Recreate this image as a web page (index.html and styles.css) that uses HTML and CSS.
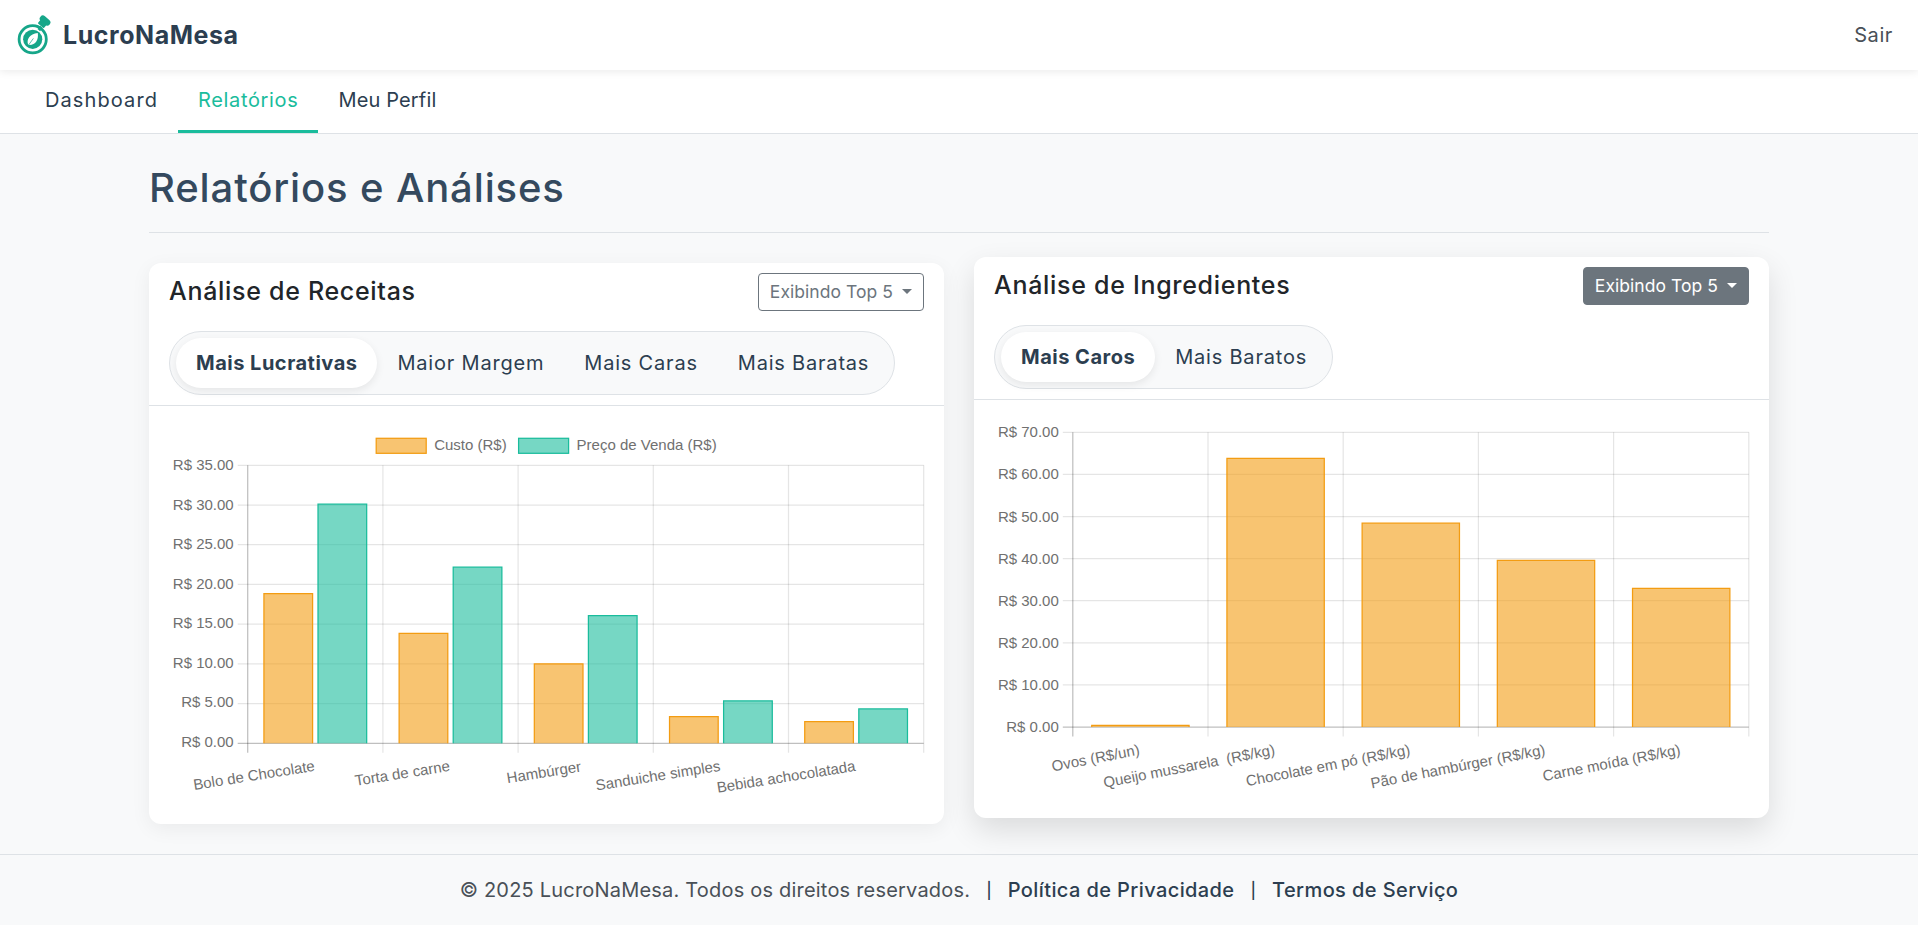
FILE: index.html
```html
<!DOCTYPE html>
<html lang="pt-BR">
<head>
    <meta charset="UTF-8">
    <meta name="viewport" content="width=device-width, initial-scale=1.0">
    <title>Relatórios - LucroNaMesa</title>
    <link rel="stylesheet" href="styles.css">
</head>
<body>
    <header class="topbar">
        <a class="brand" href="#">
            <svg class="brand-logo" viewBox="0 0 36 40" aria-hidden="true">
                <circle cx="15.7" cy="24.3" r="13.6" fill="none" stroke="#16a689" stroke-width="2.8"/>
                <circle cx="15.7" cy="24.3" r="9.6" fill="#16a689"/>
                <path d="M11.2 29.8c-2-5.6 1.4-10.6 9.6-11.8 1 7.2-2.6 12.6-9.6 11.8z" fill="#fff"/>
                <path d="M10.6 31.4l5.8-8" stroke="#16a689" stroke-width=".7"/>
                <path d="M21.8 12.4l2.6 2.2" stroke="#16a689" stroke-width="4"/>
                <g transform="rotate(40 26 8)" fill="#16a689">
                    <rect x="20" y="1.6" width="12" height="6.4" rx="3.2"/>
                    <rect x="22" y="6" width="8" height="5.6" rx="1"/>
                </g>
            </svg>
            <span class="brand-name">LucroNaMesa</span>
        </a>
        <a class="logout" href="#">Sair</a>
    </header>

    <nav class="mainnav">
        <a class="mainnav-link" href="#">Dashboard</a>
        <a class="mainnav-link active" href="#">Relatórios</a>
        <a class="mainnav-link tight" href="#">Meu Perfil</a>
    </nav>

    <main class="page">
        <h1 class="page-title">Relatórios e Análises</h1>

        <div class="report-grid">
            <section class="card">
                <div class="card-head">
                    <div class="card-top">
                        <h2 class="card-title">Análise de Receitas</h2>
                        <button class="top-btn" type="button">Exibindo Top 5</button>
                    </div>
                    <div class="pills">
                        <a class="pill active" href="#">Mais Lucrativas</a>
                        <a class="pill" href="#">Maior Margem</a>
                        <a class="pill" href="#">Mais Caras</a>
                        <a class="pill" href="#">Mais Baratas</a>
                    </div>
                </div>
                <div class="chart" id="recipesChart"></div>
            </section>

            <section class="card card-raised">
                <div class="card-head">
                    <div class="card-top">
                        <h2 class="card-title">Análise de Ingredientes</h2>
                        <button class="top-btn filled" type="button">Exibindo Top 5</button>
                    </div>
                    <div class="pills">
                        <a class="pill active" href="#">Mais Caros</a>
                        <a class="pill" href="#">Mais Baratos</a>
                    </div>
                </div>
                <div class="chart" id="ingredientsChart"></div>
            </section>
        </div>
    </main>

    <footer class="footer">
        <span class="footer-copy">© 2025 LucroNaMesa. Todos os direitos reservados.</span>
        <span class="footer-sep">|</span>
        <a href="#">Política de Privacidade</a>
        <span class="footer-sep">|</span>
        <a href="#">Termos de Serviço</a>
    </footer>

    <script src="charts.js"></script>
</body>
</html>
```

FILE: styles.css
```css
* {
    margin: 0;
    padding: 0;
    box-sizing: border-box;
}

body {
    display: flex;
    flex-direction: column;
    background-color: #f8f9fa;
    font-family: Inter, "Noto Sans", sans-serif;
    color: #2c3e50;
}

a {
    color: inherit;
    text-decoration: none;
}

.topbar {
    display: flex;
    align-items: center;
    justify-content: space-between;
    height: 70px;
    padding: 0 25px 0 17px;
    background-color: #fff;
    box-shadow: 0 2px 8px rgba(0, 0, 0, 0.08);
    position: relative;
}

.brand {
    display: flex;
    align-items: center;
    gap: 10px;
}

.brand-logo {
    width: 36px;
    height: 40px;
}

.brand-name {
    font-size: 25px;
    font-weight: 700;
    letter-spacing: 0.55px;
}

.logout {
    font-size: 20px;
    letter-spacing: 0.6px;
    color: #495057;
}

.mainnav {
    display: flex;
    height: 64px;
    padding: 0 25px;
    background-color: #fff;
    border-bottom: 1px solid #dee2e6;
}

.mainnav-link {
    display: flex;
    align-items: center;
    height: 63px;
    padding: 0 20px;
    font-size: 20px;
    letter-spacing: 1.1px;
    border-bottom: 3px solid transparent;
}

.mainnav-link.tight {
    letter-spacing: 0.15px;
}

.mainnav-link.active {
    color: #1abc9c;
    letter-spacing: 0.65px;
    border-bottom-color: #1abc9c;
}

.page {
    width: 1620px;
    margin: 0 auto;
    padding: 25px 0 30px;
}

.page-title {
    padding-bottom: 15px;
    border-bottom: 1px solid #dee2e6;
    font-size: 40px;
    font-weight: 500;
    line-height: 58px;
    letter-spacing: 0.87px;
    color: #34495e;
}

.report-grid {
    display: grid;
    grid-template-columns: 795px 795px;
    gap: 30px;
    margin-top: 30px;
}

.card {
    height: 561px;
    background-color: #fff;
    border-radius: 12px;
    box-shadow: 0 5px 20px rgba(0, 0, 0, 0.06);
}

.card-raised {
    transform: translateY(-6px);
    box-shadow: 0 12px 30px rgba(0, 0, 0, 0.12);
}

.card-head {
    height: 143px;
    padding: 10px 20px 0;
    border-bottom: 1px solid #dee2e6;
}

.card-top {
    display: flex;
    align-items: center;
    justify-content: space-between;
    height: 38px;
}

.card-title {
    padding-bottom: 2px;
    font-size: 25px;
    font-weight: 500;
    letter-spacing: 0.7px;
    color: #212529;
}

.top-btn {
    display: flex;
    align-items: center;
    gap: 9px;
    height: 38px;
    padding: 0 11px 2px;
    font-family: inherit;
    font-size: 17.5px;
    letter-spacing: 0.05px;
    color: #6c757d;
    background-color: #fff;
    border: 1px solid #6c757d;
    border-radius: 4px;
}

.top-btn::after {
    content: "";
    border-top: 5px solid currentColor;
    border-left: 5px solid transparent;
    border-right: 5px solid transparent;
}

.top-btn.filled {
    color: #fff;
    background-color: #6c757d;
}

.pills {
    display: inline-flex;
    align-items: center;
    height: 64px;
    margin-top: 20px;
    padding: 0 5px 0 6px;
    background-color: #f8f9fa;
    border: 1px solid #dee2e6;
    border-radius: 32px;
}

.pill {
    display: flex;
    align-items: center;
    height: 50px;
    padding: 0 20px;
    font-size: 20px;
    letter-spacing: 0.8px;
    border-radius: 25px;
}

.pill.active {
    font-weight: 700;
    letter-spacing: 0.5px;
    background-color: #fff;
    box-shadow: 0 3px 8px rgba(0, 0, 0, 0.08);
}

.chart svg {
    display: block;
}

.chart-text {
    font-family: "Liberation Sans", Arial, sans-serif;
    font-size: 15px;
    white-space: pre;
    fill: #707070;
}

.footer {
    display: flex;
    align-items: center;
    justify-content: center;
    height: 71px;
    border-top: 1px solid #dee2e6;
    font-size: 20px;
    color: #495057;
}

.footer-copy {
    letter-spacing: 0.2px;
}

.footer a {
    font-weight: 500;
    letter-spacing: 0.4px;
    color: #2c3e50;
}

.footer-sep {
    margin: 0 16px;
    font-size: 16px;
    font-weight: 500;
    color: #2c3e50;
}
```

FILE: charts.js
```js
const NS = 'http://www.w3.org/2000/svg';
const ORANGE = { fill: 'rgba(243, 156, 18, 0.6)', line: '#f39c12' };
const GREEN = { fill: 'rgba(26, 188, 156, 0.6)', line: '#1abc9c' };

function add(parent, tag, attrs, text) {
    const el = document.createElementNS(NS, tag);
    for (const key in attrs) el.setAttribute(key, attrs[key]);
    if (text) el.textContent = text;
    parent.appendChild(el);
    return el;
}

function drawChart(id, cfg) {
    const svg = add(document.getElementById(id), 'svg', { width: 795, height: cfg.height });
    const catWidth = (cfg.right - cfg.left) / cfg.labels.length;
    const perValue = (cfg.base - cfg.top) / cfg.max;
    const tickBottom = cfg.base + 9.5;

    // grid
    for (let v = 0; v <= cfg.max; v += cfg.step) {
        const y = cfg.base - v * perValue;
        add(svg, 'line', {
            x1: cfg.left - 10, x2: cfg.right, y1: y, y2: y,
            stroke: v === 0 ? 'rgba(0,0,0,0.25)' : 'rgba(0,0,0,0.1)', 'stroke-width': 1.25
        });
        // labels drift a little above their line towards the bottom of the scale
        const labelY = y + 5 - cfg.tickDrift * (1 - v / cfg.max);
        add(svg, 'text', { x: cfg.left - 14, y: labelY, 'text-anchor': 'end', class: 'chart-text' }, 'R$ ' + v.toFixed(2));
    }
    cfg.labels.forEach((label, i) => {
        const x = cfg.left + i * catWidth;
        add(svg, 'line', {
            x1: x, x2: x, y1: cfg.top, y2: tickBottom,
            stroke: i === 0 ? 'rgba(0,0,0,0.25)' : 'rgba(0,0,0,0.1)', 'stroke-width': 1.25
        });
        const cx = x + catWidth / 2;
        add(svg, 'text', {
            transform: 'translate(' + cx + ' ' + (tickBottom + 18) + ') rotate(' + -cfg.angle + ')',
            'text-anchor': 'end', class: 'chart-text'
        }, label);
    });
    add(svg, 'line', {
        x1: cfg.right, x2: cfg.right, y1: cfg.top, y2: tickBottom,
        stroke: 'rgba(0,0,0,0.1)', 'stroke-width': 1.25
    });

    // bars
    const slot = catWidth * 0.8 / cfg.series.length;
    cfg.series.forEach((serie, s) => {
        serie.values.forEach((value, i) => {
            const x = cfg.left + i * catWidth + catWidth * 0.1 + s * slot + slot * 0.05;
            const w = slot * 0.9;
            const y = cfg.base - value * perValue;
            add(svg, 'rect', { x: x, y: y, width: w, height: cfg.base - y, fill: serie.color.fill });
            add(svg, 'path', {
                d: 'M' + x + ' ' + cfg.base + 'V' + y + 'H' + (x + w) + 'V' + cfg.base,
                fill: 'none', stroke: serie.color.line, 'stroke-width': 1.25
            });
        });
    });

    // legend
    (cfg.legend || []).forEach(item => {
        add(svg, 'rect', { x: item.x, y: item.y, width: 50, height: 15, fill: item.color.fill, stroke: item.color.line, 'stroke-width': 1.25 });
        add(svg, 'text', { x: item.x + 58, y: item.y + 12, class: 'chart-text' }, item.label);
    });
}

drawChart('recipesChart', {
    height: 418, left: 98.7, right: 774.7, top: 59.3, base: 337.3, max: 35, step: 5, angle: 9, tickDrift: 1.5,
    labels: ['Bolo de Chocolate', 'Torta de carne', 'Hambúrger ', 'Sanduiche simples', 'Bebida achocolatada'],
    series: [
        { color: ORANGE, values: [18.84, 13.85, 10, 3.35, 2.72] },
        { color: GREEN, values: [30.1, 22.17, 16.07, 5.33, 4.32] }
    ],
    legend: [
        { x: 227.2, y: 32.3, color: ORANGE, label: 'Custo (R$)' },
        { x: 369.6, y: 32.3, color: GREEN, label: 'Preço de Venda (R$)' }
    ]
});

drawChart('ingredientsChart', {
    height: 418, left: 98.8, right: 774.8, top: 32.3, base: 327, max: 70, step: 10, angle: 11, tickDrift: 0,
    labels: ['Ovos (R$/un)', 'Queijo mussarela  (R$/kg)', 'Chocolate em pó (R$/kg)', 'Pão de hambúrger (R$/kg)', 'Carne moída (R$/kg)'],
    series: [
        { color: ORANGE, values: [0.4, 63.8, 48.4, 39.6, 32.9] }
    ]
});
```
